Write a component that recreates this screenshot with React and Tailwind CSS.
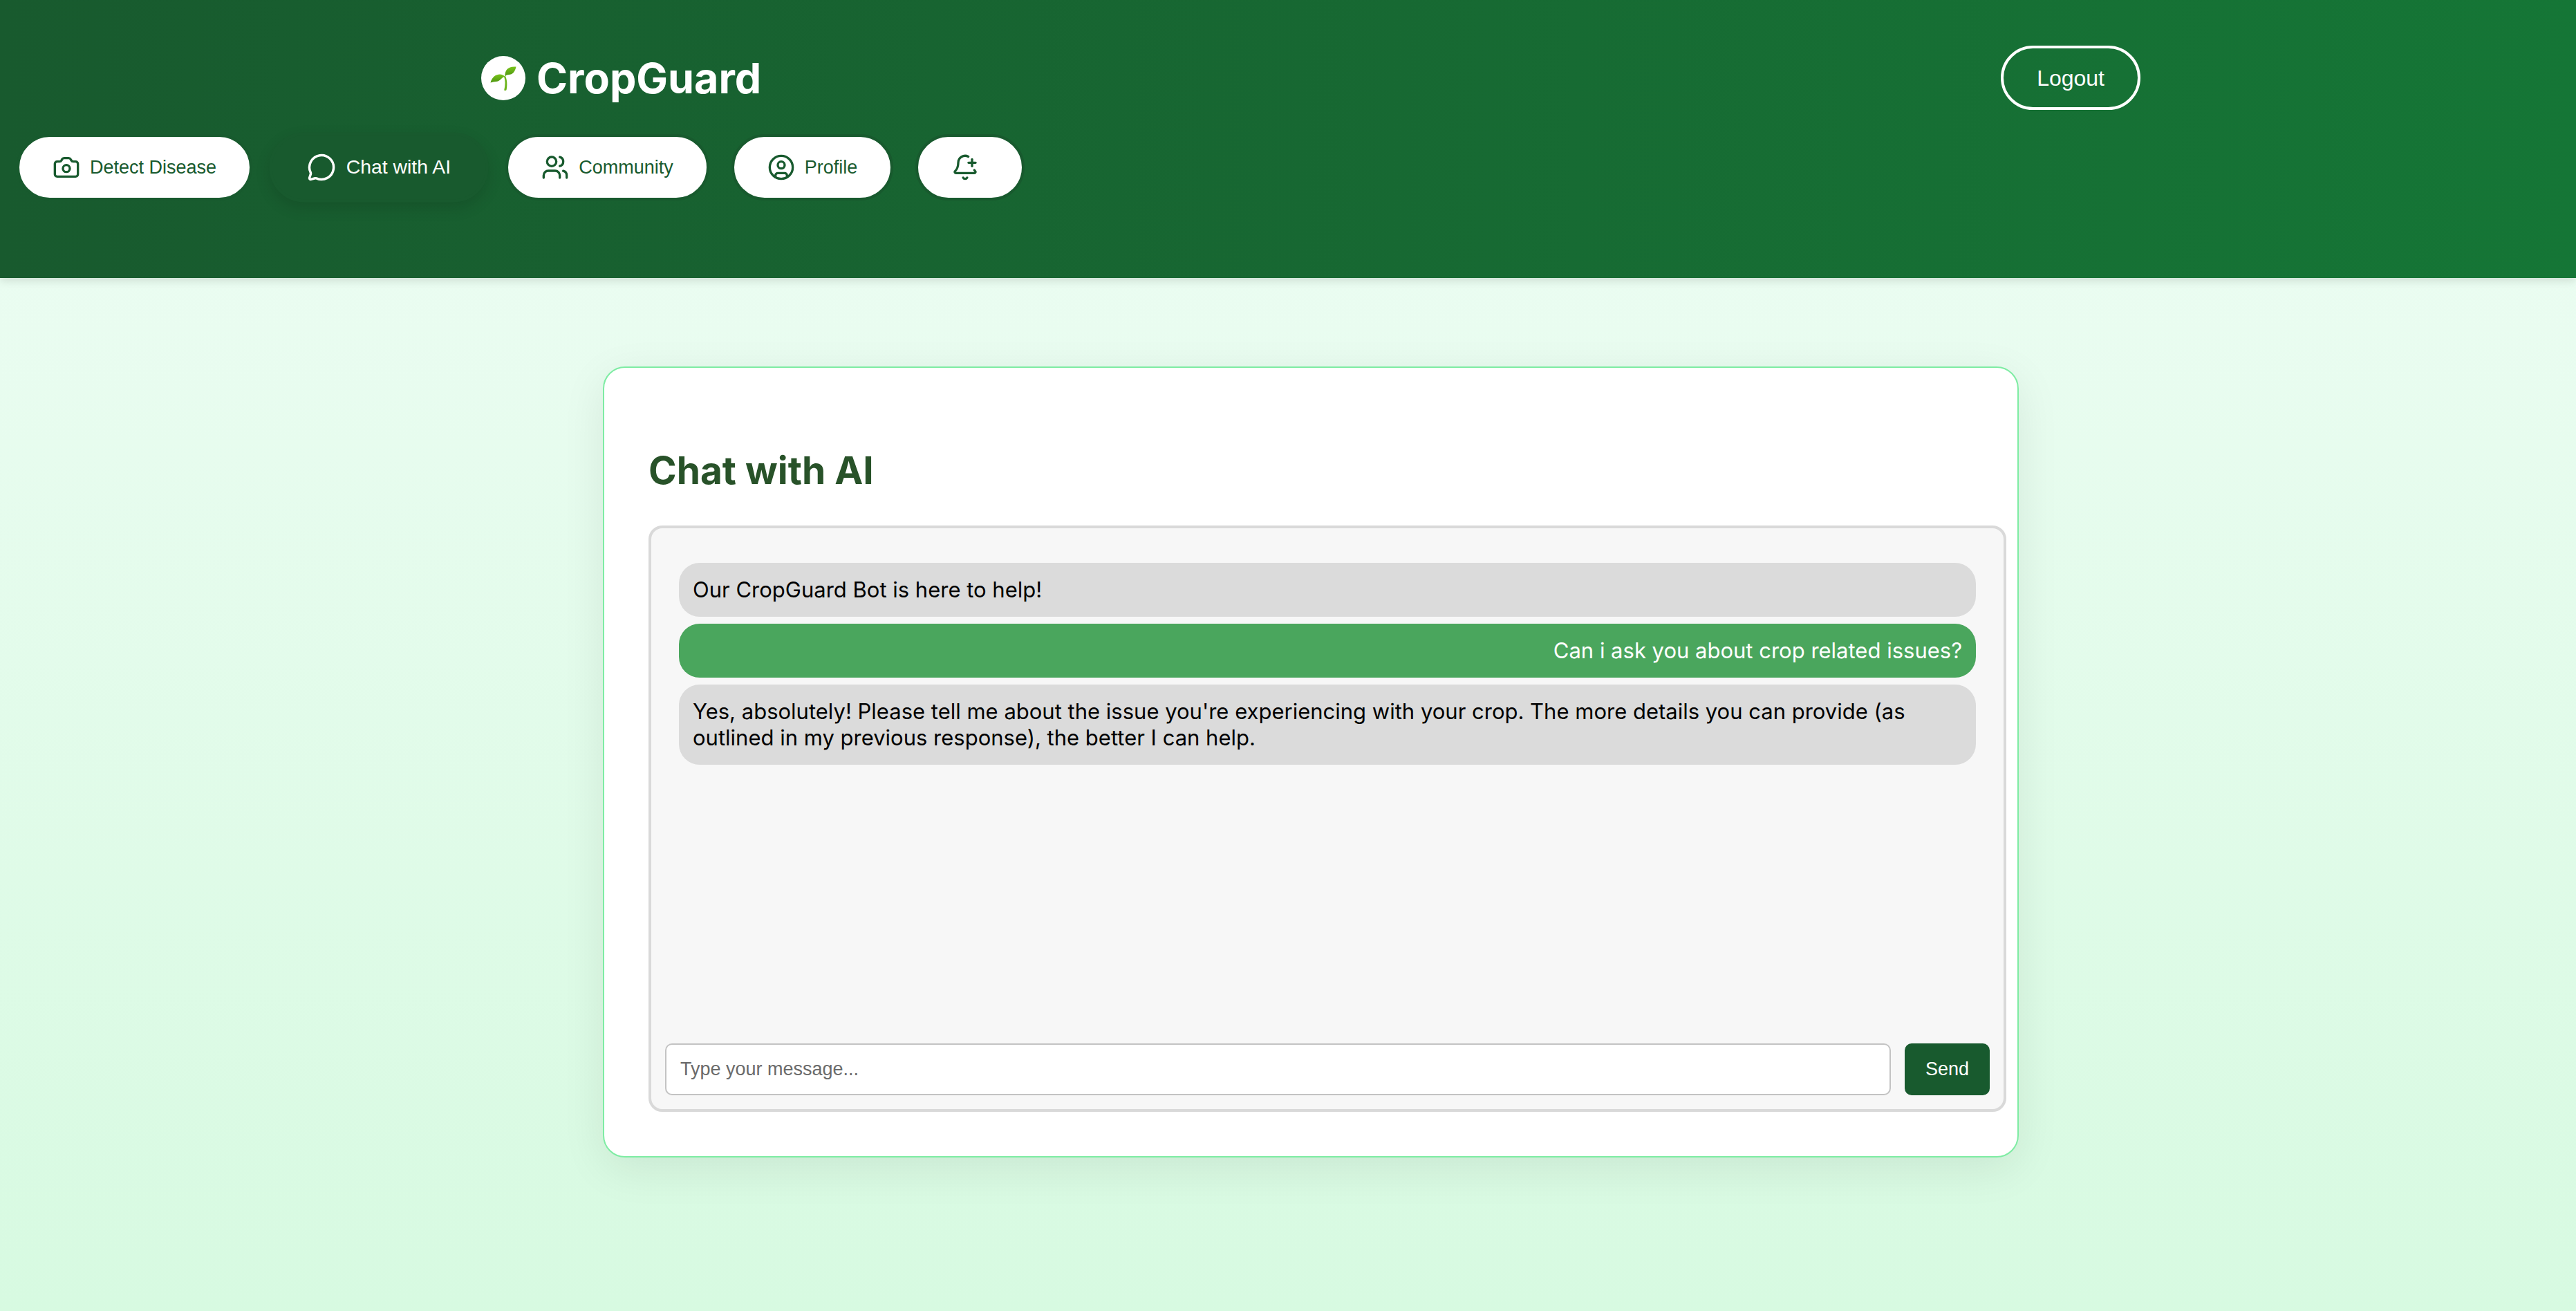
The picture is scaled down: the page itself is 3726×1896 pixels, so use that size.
import { Camera, MessageCircle, Users, CircleUser, BellPlus } from "lucide-react";

const navItems = [
  { label: "Detect Disease", icon: Camera },
  { label: "Chat with AI", icon: MessageCircle, active: true },
  { label: "Community", icon: Users },
  { label: "Profile", icon: CircleUser },
  { label: "", name: "Notifications", icon: BellPlus },
];

const messages = [
  { from: "bot", text: "Our CropGuard Bot is here to help!" },
  { from: "user", text: "Can i ask you about crop related issues?" },
  {
    from: "bot",
    text: "Yes, absolutely! Please tell me about the issue you're experiencing with your crop. The more details you can provide (as outlined in my previous response), the better I can help.",
  },
];

function Sprout() {
  return (
    <svg viewBox="0 0 64 64" className="size-16 rounded-full bg-white" aria-hidden="true">
      <defs>
        <linearGradient id="leaf" x1="0" y1="0" x2="0" y2="1">
          <stop offset="0" stopColor="#7ac41c" />
          <stop offset="1" stopColor="#4c9410" />
        </linearGradient>
      </defs>
      <path d="M35 29C37.500 34 38 42 36.500 49.300Q35 50.600 33.200 49.600C35 42 35 35 33 29.500Z" fill="#6db51c" />
      <path d="M34.500 30C30 24 17 25 13.500 38.500C19 36.500 24 38.500 29 33Q31.500 30 34.500 30Z" fill="url(#leaf)" />
      <path d="M34.500 29.500C34 20 39 14.500 50.500 15.500C49 23 45 27.500 39 27Q36 27 34.500 29.500Z" fill="url(#leaf)" />
    </svg>
  );
}

function NavButton({ item }) {
  const Icon = item.icon;
  const tone = item.active
    ? "bg-[#185a2e] text-white scale-105 shadow-[0_8px_20px_rgba(0,0,0,0.12)]"
    : "bg-white text-[#185a2e]";
  return (
    <button
      type="button"
      aria-label={item.label || item.name}
      className={`flex h-24 items-center gap-[14px] rounded-full border-4 border-[#185a2e] px-12 text-[27px] leading-8 ${tone}`}
    >
      <Icon className="size-10" strokeWidth={2} />
      <span>{item.label}</span>
    </button>
  );
}

export default function App() {
  return (
    <div className="min-h-screen bg-linear-to-b from-[#effdf5] to-[#d7fae1] font-['Liberation_Sans',sans-serif]">
      <header className="bg-linear-to-r from-[#185a2e] to-[#157636] pt-[66px] pb-28 shadow-[0_4px_12px_rgba(0,0,0,0.12)]">
        <div className="pl-[66px]">
          <div className="mx-auto flex w-full max-w-[2400px] items-center justify-between">
            <div className="flex items-center gap-4 text-white">
              <Sprout />
              <span className="font-['Inter',sans-serif] text-[61px] leading-18 font-bold">CropGuard</span>
            </div>
            <button type="button" className="h-[93px] rounded-full border-4 border-white px-12 text-[32px] text-white">
              Logout
            </button>
          </div>
        </div>
        <nav className="mt-[35px] flex gap-8 px-6">
          {navItems.map((item) => (
            <NavButton key={item.name || item.label} item={item} />
          ))}
        </nav>
      </header>

      <div className="pt-32 pl-[66px]">
        <main className="mx-auto w-full max-w-[2048px] rounded-[32px] border-2 border-[#7eeca3] bg-white pt-28 pr-4 pb-16 pl-16 font-['Inter',sans-serif] shadow-[0_16px_64px_rgba(0,0,0,0.08)]">
          <h1 className="text-[55px] leading-18 font-bold text-[#285229]">Chat with AI</h1>
          <section className="mt-11 flex min-h-[848px] flex-col justify-between rounded-[20px] border-4 border-[#d9d9d9] bg-[#f7f7f7] p-5">
            <ul className="flex flex-col gap-[10px] px-5 pt-[30px]">
              {messages.map((m) => (
                <li
                  key={m.text}
                  className={`rounded-[30px] p-5 text-[31px] leading-[38px] ${
                    m.from === "user" ? "bg-[#4aa65d] text-right text-white" : "bg-[#dbdbdb] text-black"
                  }`}
                >
                  {m.text}
                </li>
              ))}
            </ul>
            <form className="flex gap-5 font-['Liberation_Sans',sans-serif]" onSubmit={(e) => e.preventDefault()}>
              <input
                type="text"
                aria-label="Message"
                placeholder="Type your message..."
                className="h-[75px] min-w-0 flex-1 rounded-[10px] border-2 border-[#c3c3c3] bg-white px-5 text-[27px] placeholder:text-[#6b6b6b]"
              />
              <button type="submit" className="rounded-[10px] bg-[#185a2e] px-[30px] text-[27px] text-white">
                Send
              </button>
            </form>
          </section>
        </main>
      </div>
    </div>
  );
}
